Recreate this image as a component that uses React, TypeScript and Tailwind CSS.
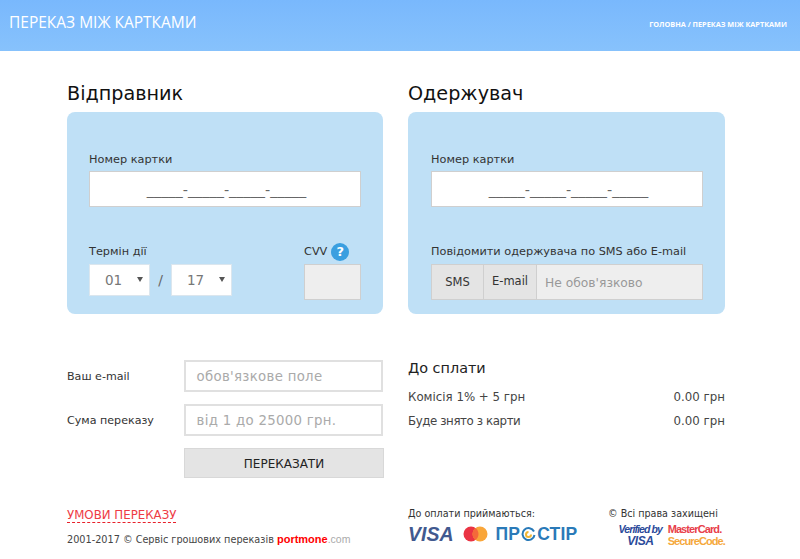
import React from 'react';

const font = "font-['DejaVu_Sans',sans-serif]";

const CardNumber: React.FC = () => (
  <div className="flex h-[36px] w-[272px] items-center justify-center border border-[#cfcfcf] bg-white pt-[3px] pl-[3px] text-[14.4px] text-[#666]">
    <span>_____-_____-_____-_____</span>
  </div>
);

const Select: React.FC<{ value: string }> = ({ value }) => (
  <div className="relative flex h-[32px] w-[61px] items-center border border-[#dbe6ee] bg-white pl-[15px] text-[13.5px] text-[#777]">
    {value}
    <span className="absolute top-[12px] right-[6px] h-0 w-0 border-x-[3px] border-t-[5px] border-x-transparent border-t-[#555]" />
  </div>
);

const PayRow: React.FC<{ label: string; labelClass?: string }> = ({ label, labelClass }) => (
  <div className="flex justify-between text-[11.8px] leading-[18px] text-[#444]">
    <span className={labelClass}>{label}</span>
    <span>0.00 грн</span>
  </div>
);

const FormRow: React.FC<{ label: string; placeholder: string }> = ({ label, placeholder }) => (
  <div className="flex items-center">
    <span className="mt-[2px] w-[117px] text-[11.1px] text-[#333]">{label}</span>
    <div className="flex h-[32px] w-[200px] items-center border-2 border-[#e0e0e0] pt-[2px] pl-[11px] text-[13.3px] tracking-[0.3px] text-[#aaa]">
      {placeholder}
    </div>
  </div>
);

const App: React.FC = () => {
  return (
    <div className={`${font} h-[559px] w-[800px] overflow-hidden bg-white`}>
      {/* Header */}
      <div className="flex h-[51px] items-center justify-between bg-gradient-to-b from-[#79b8fd] to-[#87c2fc] pr-[13px] pl-[9px]">
        <div className="-mt-[6px] font-['Open_Sans',sans-serif] text-[15.5px] text-white">ПЕРЕКАЗ МІЖ КАРТКАМИ</div>
        <div className="mt-[-3px] font-['Open_Sans',sans-serif] text-[7.3px] font-bold text-white">ГОЛОВНА / ПЕРЕКАЗ МІЖ КАРТКАМИ</div>
      </div>

      <div className="ml-[67px] w-[658px]">
        {/* Cards */}
        <div className="mt-[29px] grid grid-cols-[316px_317px] gap-x-[25px]">
          <div>
            <h2 className="mb-[5px] h-[27px] text-[19.2px] leading-[27px] text-[#111]">Відправник</h2>
            <div className="h-[202px] rounded-[8px] bg-[#bfe0f6] pt-[40px] pl-[22px]">
              <div className="mb-[4px] h-[15px] text-[11.3px] leading-[15px] text-[#333]">Номер картки</div>
              <CardNumber />
              <div className="mt-[36px] flex">
                <div>
                  <div className="mb-[3px] h-[18px] text-[11.3px] leading-[18px] text-[#333]">Термін дії</div>
                  <div className="flex items-center">
                    <Select value="01" />
                    <span className="w-[21px] text-center text-[14px] text-[#666]">/</span>
                    <Select value="17" />
                  </div>
                </div>
                <div className="ml-[72px]">
                  <div className="mb-[3px] flex h-[18px] items-center text-[11.3px] text-[#333]">
                    CVV
                    <span className="ml-[4px] flex h-[18px] w-[18px] items-center justify-center rounded-full bg-[#3a9fe0] text-[13px] font-bold text-white">?</span>
                  </div>
                  <div className="h-[36px] w-[57px] border border-[#cfcfcf] bg-[#eee]" />
                </div>
              </div>
            </div>
          </div>

          <div>
            <h2 className="mb-[5px] h-[27px] text-[19.2px] leading-[27px] text-[#111]">Одержувач</h2>
            <div className="h-[202px] rounded-[8px] bg-[#bfe0f6] pt-[40px] pl-[23px]">
              <div className="mb-[4px] h-[15px] text-[11.3px] leading-[15px] text-[#333]">Номер картки</div>
              <CardNumber />
              <div className="mt-[36px] mb-[3px] h-[18px] text-[11.3px] leading-[18px] text-[#333]">Повідомити одержувача по SMS або E-mail</div>
              <div className="flex h-[36px] w-[272px] border border-[#cfcfcf] bg-[#eee] pt-0 text-[11.5px] text-[#333]">
                <div className="flex w-[52px] items-center justify-center border-r border-[#cfcfcf] bg-[#e4e4e4] pt-[2px]">SMS</div>
                <div className="flex w-[53px] items-center justify-center border-r border-[#cfcfcf] bg-[#e4e4e4]">E-mail</div>
                <div className="flex flex-1 items-center pt-[2px] pl-[8px] text-[12.3px] text-[#999]">Не обов'язково</div>
              </div>
            </div>
          </div>
        </div>

        {/* Form and totals */}
        <div className="mt-[46px] grid grid-cols-[316px_317px] gap-x-[25px]">
          <div className="flex flex-col gap-[12px]">
            <FormRow label="Ваш e-mail" placeholder="обов'язкове поле" />
            <FormRow label="Сума переказу" placeholder="від 1 до 25000 грн." />
            <div className="ml-[117px] flex h-[30px] w-[200px] items-center justify-center border border-[#d8d8d8] bg-[#e4e4e4] pt-[2px] text-[12px] text-[#222]">
              ПЕРЕКАЗАТИ
            </div>
          </div>
          <div>
            <h3 className="mt-[-1px] mb-[11px] text-[14.4px] leading-[18px] text-[#222]">До сплати</h3>
            <div className="flex flex-col gap-[6px]">
              <PayRow label="Комісія 1% + 5 грн" />
              <PayRow label="Буде знято з карти" labelClass="tracking-[-0.4px]" />
            </div>
          </div>
        </div>

        {/* Footer */}
        <div className="mt-[24px] flex">
          <div className="w-[341px]">
            <div className="inline-block border-b border-dashed border-[#e8202a] text-[11.8px] leading-[13px] text-[#ee3b45]">УМОВИ ПЕРЕКАЗУ</div>
            <div className="mt-[6px] text-[9.7px] leading-[14px] text-[#444]">
              2001-2017 © Сервіс грошових переказів{' '}
              <span className="font-['Liberation_Sans',sans-serif] text-[11px] font-bold text-[#f00]">portmone</span>
              <span className="font-['Liberation_Sans',sans-serif] text-[10.5px] text-[#aaa]">.com</span>
            </div>
          </div>
          <div className="w-[200px] pt-[5px]">
            <div className="text-[9.6px] leading-[13px] text-[#333]">До оплати приймаються:</div>
            <div className="mt-[4px] flex items-center font-['Liberation_Sans',sans-serif]">
              <span className="text-[19.5px] leading-[20px] font-bold text-[#41598f] italic">VISA</span>
              <svg className="ml-[9px]" width="25" height="16" viewBox="0 0 25 16">
                <circle cx="8" cy="8" r="7.5" fill="#ea3343" />
                <circle cx="17" cy="8" r="7.5" fill="#f9a63a" />
                <path d="M12.5 2a7.5 7.5 0 0 1 0 12a7.5 7.5 0 0 1 0-12z" fill="#f4693a" />
              </svg>
              <span className="ml-[8px] flex items-center text-[17.5px] leading-[20px] font-bold tracking-[0.2px] text-[#2a7ab8]">
                ПР
                <svg className="mx-[1px]" width="15" height="15" viewBox="0 0 15 15" fill="none">
                  <path d="M13 4.5A6 6 0 1 0 13.5 8" stroke="#2a7ab8" strokeWidth="2" />
                  <path d="M10 7.5a2.5 2.5 0 1 1-2.5-2.5" stroke="#f2b632" strokeWidth="2" />
                </svg>
                СТІР
              </span>
            </div>
          </div>
          <div className="w-[117px] pt-[5px]">
            <div className="text-[9.6px] leading-[13px] whitespace-nowrap text-[#333]">© Всі права захищені</div>
            <div className="mt-[4px] ml-[10px] flex font-['Liberation_Sans',sans-serif]">
              <div className="w-[45px] text-center text-[#2b4a9a] italic">
                <div className="text-[10.5px] leading-[11px] font-bold tracking-[-0.9px] whitespace-nowrap">Verified by</div>
                <div className="text-[12px] leading-[12px] font-bold tracking-[-0.5px]">VISA</div>
              </div>
              <div className="ml-[5px] font-bold">
                <div className="text-[11px] leading-[11px] tracking-[-0.9px] text-[#e8404a]">MasterCard.</div>
                <div className="text-[11px] leading-[12px] tracking-[-0.9px] text-[#f5a83c]">SecureCode.</div>
              </div>
            </div>
          </div>
        </div>
      </div>
    </div>
  );
};

export default App;
